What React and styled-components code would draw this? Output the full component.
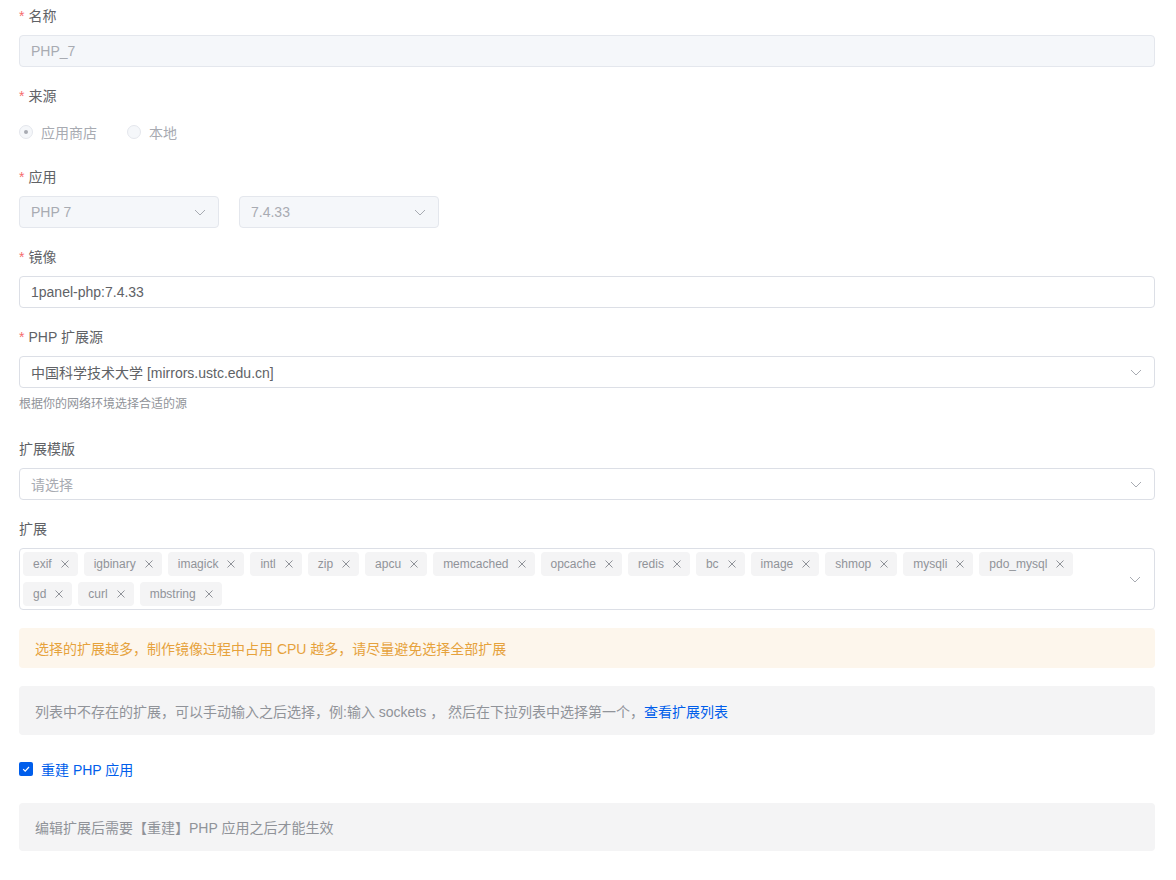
import styled, { createGlobalStyle } from "styled-components";

const GlobalStyle = createGlobalStyle`
  body {
    margin: 0;
    background: #fff;
    font-family: "Liberation Sans", "Noto Sans CJK SC", sans-serif;
    font-size: 14px;
    color: #606266;
  }
  * { box-sizing: border-box; }
`;

const Page = styled.div`
  padding: 5px 21px 20px 19px;
`;

const Item = styled.div`
  margin-bottom: 18px;
`;

const Label = styled.div`
  line-height: 22px;
  margin-bottom: 8px;
  font-size: 14px;
  color: #606266;
  &::before {
    content: ${(p) => (p.$required ? '"*"' : "none")};
    color: #f56c6c;
    margin-right: 4px;
  }
`;

const Box = styled.div`
  display: flex;
  align-items: center;
  height: 32px;
  width: ${(p) => p.$width || "100%"};
  padding: 0 11px;
  border: 1px solid ${(p) => (p.$disabled ? "#e4e7ed" : "#dcdfe6")};
  border-radius: 4px;
  background: ${(p) => (p.$disabled ? "#f5f7fa" : "#fff")};
  color: ${(p) => (p.$disabled || p.$placeholder ? "#a8abb2" : "#606266")};
  font-size: 14px;
`;

const Text = styled.span`
  flex: 1;
  white-space: nowrap;
`;

const Row = styled.div`
  display: flex;
  gap: 20px;
`;

const Chevron = () => (
  <svg width="14" height="14" viewBox="0 0 14 14" fill="none">
    <path d="M2 5l5 5 5-5" stroke="#a8abb2" strokeWidth="1" />
  </svg>
);

const RadioGroup = styled.div`
  display: flex;
  align-items: center;
  height: 33px;
  gap: 30px;
`;

const Radio = styled.label`
  display: flex;
  align-items: center;
  gap: 8px;
  color: #a8abb2;
  font-size: 14px;
`;

const RadioDot = styled.span`
  width: 14px;
  height: 14px;
  border-radius: 50%;
  border: 1px solid #e4e7ed;
  background: #f5f7fa;
  display: flex;
  align-items: center;
  justify-content: center;
  &::after {
    content: "";
    width: 4px;
    height: 4px;
    border-radius: 50%;
    background: ${(p) => (p.$checked ? "#a8abb2" : "transparent")};
  }
`;

const Help = styled.div`
  font-size: 12px;
  line-height: 20px;
  color: #909399;
  margin-top: 6px;
  margin-bottom: 24px;
`;

const Multi = styled.div`
  position: relative;
  border: 1px solid #dcdfe6;
  border-radius: 4px;
  padding: 3px 60px 3px 3px;
  display: flex;
  flex-wrap: wrap;
  gap: 6px;
  min-height: 62px;
`;

const ArrowSlot = styled.span`
  position: absolute;
  right: 12px;
  top: 50%;
  transform: translateY(-50%);
  display: flex;
`;

const Tag = styled.span`
  display: inline-flex;
  align-items: center;
  height: 24px;
  padding: 0 6px 0 10px;
  border-radius: 4px;
  background: #f4f4f5;
  color: #909399;
  font-size: 12px;
  gap: 6px;
`;

const Close = () => (
  <svg width="14" height="14" viewBox="0 0 14 14" fill="none">
    <path d="M3.5 3.5l7 7M10.5 3.5l-7 7" stroke="#909399" strokeWidth="1" />
  </svg>
);

const Alert = styled.div`
  display: flex;
  align-items: center;
  height: ${(p) => p.$height || "40px"};
  padding: 0 16px;
  border-radius: 4px;
  background: ${(p) => (p.$warning ? "#fdf6ec" : "#f4f4f5")};
  color: ${(p) => (p.$warning ? "#e6a23c" : "#909399")};
  font-size: 14px;
  margin-bottom: 18px;
`;

const Link = styled.a`
  color: #005eeb;
  text-decoration: none;
`;

const CheckRow = styled.label`
  display: flex;
  align-items: center;
  height: 32px;
  gap: 8px;
  color: #005eeb;
  font-size: 14px;
  margin-bottom: 18px;
`;

const CheckBox = styled.span`
  width: 14px;
  height: 14px;
  border-radius: 2px;
  background: #005eeb;
  display: flex;
  align-items: center;
  justify-content: center;
`;

const exts = [
  "exif", "igbinary", "imagick", "intl", "zip", "apcu", "memcached", "opcache",
  "redis", "bc", "image", "shmop", "mysqli", "pdo_mysql", "gd", "curl", "mbstring",
];

export default function App() {
  return (
    <Page>
      <GlobalStyle />
      <Item>
        <Label $required>名称</Label>
        <Box $disabled><Text>PHP_7</Text></Box>
      </Item>
      <Item>
        <Label $required>来源</Label>
        <RadioGroup>
          <Radio><RadioDot $checked />应用商店</Radio>
          <Radio><RadioDot />本地</Radio>
        </RadioGroup>
      </Item>
      <Item>
        <Label $required>应用</Label>
        <Row>
          <Box $disabled $width="200px"><Text>PHP 7</Text><Chevron /></Box>
          <Box $disabled $width="200px"><Text>7.4.33</Text><Chevron /></Box>
        </Row>
      </Item>
      <Item>
        <Label $required>镜像</Label>
        <Box><Text>1panel-php:7.4.33</Text></Box>
      </Item>
      <div>
        <Label $required>PHP 扩展源</Label>
        <Box><Text>中国科学技术大学 [mirrors.ustc.edu.cn]</Text><Chevron /></Box>
        <Help>根据你的网络环境选择合适的源</Help>
      </div>
      <Item>
        <Label>扩展模版</Label>
        <Box $placeholder><Text>请选择</Text><Chevron /></Box>
      </Item>
      <Item>
        <Label>扩展</Label>
        <Multi>
          {exts.map((e) => (
            <Tag key={e}>{e}<Close /></Tag>
          ))}
          <ArrowSlot><Chevron /></ArrowSlot>
        </Multi>
      </Item>
      <Alert $warning>选择的扩展越多，制作镜像过程中占用 CPU 越多，请尽量避免选择全部扩展</Alert>
      <Alert $height="49px">
        <span>
          列表中不存在的扩展，可以手动输入之后选择，例:输入 sockets ， 然后在下拉列表中选择第一个，
          <Link>查看扩展列表</Link>
        </span>
      </Alert>
      <CheckRow>
        <CheckBox>
          <svg width="10" height="10" viewBox="0 0 10 10" fill="none">
            <path d="M2.2 5.2l2 2 3.8-4.2" stroke="#fff" strokeWidth="1.2" />
          </svg>
        </CheckBox>
        重建 PHP 应用
      </CheckRow>
      <Alert $height="48px">编辑扩展后需要【重建】PHP 应用之后才能生效</Alert>
    </Page>
  );
}
